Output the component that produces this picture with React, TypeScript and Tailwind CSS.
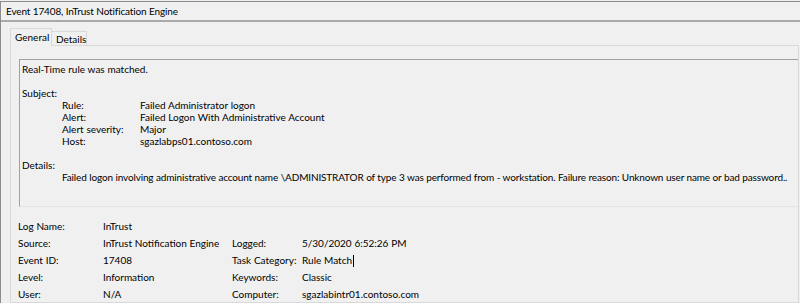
import React from 'react';

const subject = [
  ['Rule:', 'Failed Administrator logon'],
  ['Alert:', 'Failed Logon With Administrative Account'],
  ['Alert severity:', 'Major'],
  ['Host:', 'sgazlabps01.contoso.com'],
];

export default function App() {
  return (
    <div className="w-[800px] h-[303px] overflow-hidden bg-[#f0f0f0] pt-px text-[10px] [word-spacing:0.2px] text-black font-['Segoe_UI','Lato',sans-serif]">
      <div className="h-[302px] border-t border-l border-[#8c8c8c] flex flex-col">
        {/* window title */}
        <div className="h-[20px] shrink-0 border-b-2 border-[#a9a9a9] pl-[5px] pt-px leading-[17px] tracking-[-0.15px] whitespace-nowrap">
          Event 17408, InTrust Notification Engine
        </div>

        {/* tab strip */}
        <div className="h-[23px] shrink-0 flex items-end pl-[9px]">
          <div className="h-[18px] w-[42px] pl-[4px] border border-b-0 border-[#d9d9d9] bg-[#f0f0f0] leading-[16px] whitespace-nowrap relative top-px z-10">
            General
          </div>
          <div className="h-[14px] w-[35px] pl-[4px] border border-b-0 border-l-0 border-[#d9d9d9] bg-[#f0f0f0] leading-[14px] whitespace-nowrap">
            Details
          </div>
        </div>

        {/* tab panel */}
        <div className="flex-1 ml-[9px] mr-px border border-[#d9d9d9] overflow-hidden">
          <div className="mt-[13px] ml-[8px] w-[800px] h-[148px] border-t border-l border-[#a0a0a0] border-b border-b-[#e3e3e3] pl-[2px] pt-[3px] leading-[12px] whitespace-nowrap">
            <div>Real-Time rule was matched.</div>
            <div className="h-[12px]" />
            <div>Subject:</div>
            {subject.map(([k, v]) => (
              <div key={k} className="flex">
                <span className="w-[78px] ml-[40px]">{k}</span>
                <span>{v}</span>
              </div>
            ))}
            <div className="h-[12px]" />
            <div>Details:</div>
            <div className="ml-[40px] tracking-[-0.15px]">
              Failed logon involving administrative account name \ADMINISTRATOR of type 3 was performed from - workstation. Failure reason: Unknown user name or bad password..
            </div>
          </div>

          <div className="mt-[11px] pl-[7px] grid grid-cols-[85px_129px_70px_1fr] auto-rows-[17px] leading-[17px] whitespace-nowrap">
            <span>Log Name:</span>
            <span>InTrust</span>
            <span />
            <span />

            <span>Source:</span>
            <span>InTrust Notification Engine</span>
            <span>Logged:</span>
            <span>5/30/2020 6:52:26 PM</span>

            <span>Event ID:</span>
            <span>17408</span>
            <span>Task Category:</span>
            <span className="flex items-center">
              Rule Match
              <span className="inline-block w-px h-[12px] bg-black ml-px" />
            </span>

            <span>Level:</span>
            <span>Information</span>
            <span>Keywords:</span>
            <span>Classic</span>

            <span>User:</span>
            <span>N/A</span>
            <span>Computer:</span>
            <span>sgazlabintr01.contoso.com</span>
          </div>
        </div>
      </div>
    </div>
  );
}
